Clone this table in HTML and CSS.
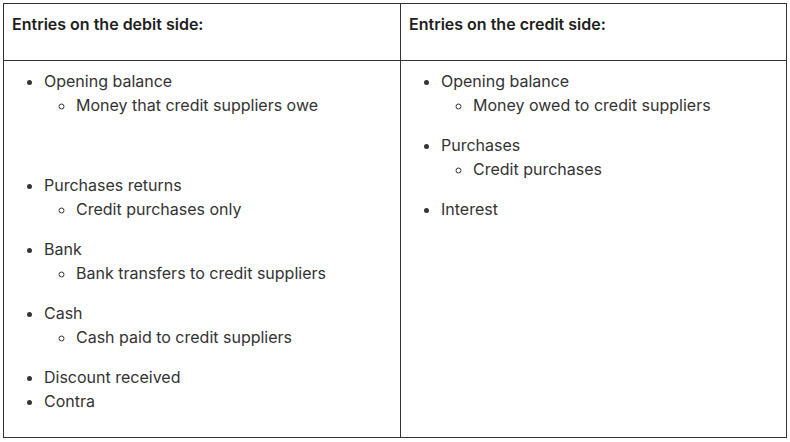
FILE: index.html
```html
<!DOCTYPE html>
<html>
<head>
<meta charset="utf-8">
<link rel="stylesheet" href="styles.css">
</head>
<body>
<table class="ledger">
  <colgroup>
    <col class="col-debit">
    <col class="col-credit">
  </colgroup>
  <thead>
    <tr>
      <th><p class="head">Entries on the debit side:</p></th>
      <th><p class="head">Entries on the credit side:</p></th>
    </tr>
  </thead>
  <tbody>
    <tr>
      <td>
        <ul class="list">
          <li class="group spaced">Opening balance
            <ul class="sub"><li>Money that credit suppliers owe</li></ul>
          </li>
          <li class="group">Purchases returns
            <ul class="sub"><li>Credit purchases only</li></ul>
          </li>
          <li class="group">Bank
            <ul class="sub"><li>Bank transfers to credit suppliers</li></ul>
          </li>
          <li class="group">Cash
            <ul class="sub"><li>Cash paid to credit suppliers</li></ul>
          </li>
          <li>Discount received</li>
          <li>Contra</li>
        </ul>
      </td>
      <td>
        <ul class="list">
          <li class="group">Opening balance
            <ul class="sub"><li>Money owed to credit suppliers</li></ul>
          </li>
          <li class="group">Purchases
            <ul class="sub"><li>Credit purchases</li></ul>
          </li>
          <li>Interest</li>
        </ul>
      </td>
    </tr>
  </tbody>
</table>
</body>
</html>
```
FILE: styles.css
```css
html, body {
  margin: 0;
  padding: 0;
  background: #ffffff;
}
body {
  padding: 3px 0 0 3px;
  font-family: Inter, "Open Sans", sans-serif;
  font-size: 16px;
  line-height: 24px;
  color: #333333;
}
.ledger {
  border-collapse: collapse;
  width: 783px;
  height: 434px;
  table-layout: fixed;
}
.col-debit {
  width: 397px;
}
.col-credit {
  width: 386px;
}
.ledger th, .ledger td {
  border: 1px solid #333333;
  padding: 8px;
  text-align: left;
  vertical-align: top;
}
.ledger th {
  height: 40px;
}
.head {
  margin: 0;
  font-weight: 600;
  color: #1e1e1e;
}
.list {
  margin: 0 0 16px 0;
  padding-left: 32px;
  list-style: disc;
}
.sub {
  margin: 0 0 16px 0;
  padding-left: 32px;
  list-style: circle;
}
.spaced .sub {
  margin-bottom: 56px;
}
```
